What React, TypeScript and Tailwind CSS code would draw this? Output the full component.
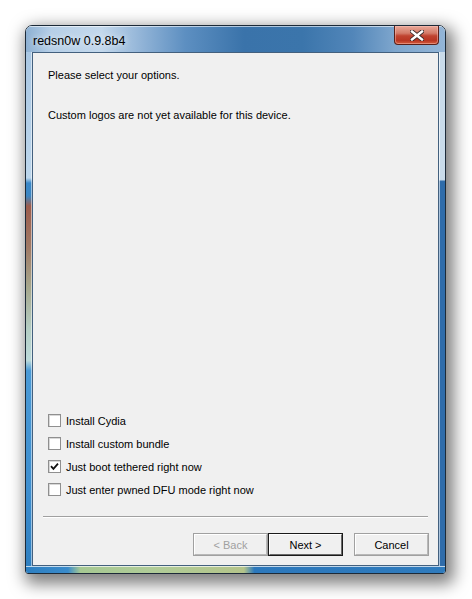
import React from "react";

const options = [
  { label: "Install Cydia", checked: false },
  { label: "Install custom bundle", checked: false },
  { label: "Just boot tethered right now", checked: true },
  { label: "Just enter pwned DFU mode right now", checked: false },
];

function CloseGlyph() {
  return (
    <svg width="14" height="11" viewBox="0 0 14 11">
      <path d="M2 1.5 L12 9.5 M12 1.5 L2 9.5" stroke="#3a2a2a" strokeWidth="4.2" strokeLinecap="square" />
      <path d="M2 1.5 L12 9.5 M12 1.5 L2 9.5" stroke="#ffffff" strokeWidth="2.4" strokeLinecap="square" />
    </svg>
  );
}

function Checkbox({ checked }: { checked: boolean }) {
  return (
    <div className="w-[13px] h-[13px] border border-[#8f8f8f] bg-white flex items-center justify-center shadow-[inset_1px_1px_0_#d8d8d8]">
      {checked && (
        <svg width="9" height="9" viewBox="0 0 9 9">
          <path d="M1 4.2 L3.4 6.8 L8 1.6" stroke="#111" strokeWidth="1.8" fill="none" />
        </svg>
      )}
    </div>
  );
}

function Button({ children, disabled, isDefault }: { children: React.ReactNode; disabled?: boolean; isDefault?: boolean }) {
  return (
    <div
      className={`h-[23px] flex items-center justify-center text-[11px] bg-[#f0f0f0] ${
        isDefault ? "w-[75px] border border-[#1a1a1a]" : "w-[75px] border border-[#a0a0a0]"
      } ${disabled ? "text-[#a0a0a0]" : "text-black"}`}
    >
      <div className={`w-full h-full flex items-center justify-center border ${isDefault ? "border-t-white border-l-white border-r-[#696969] border-b-[#696969]" : "border-t-white border-l-white border-r-[#b8b8b8] border-b-[#b8b8b8]"}`}>
        {children}
      </div>
    </div>
  );
}

export default function App() {
  return (
    <div className="w-[472px] h-[599px] bg-white pt-[25px] pl-[25px] font-['Liberation_Sans',Arial,sans-serif]">
      {/* Fenêtre */}
      <div className="w-[421px] h-[549px] flex flex-col rounded-t-[7px] rounded-b-[3px] border border-[#1c2a38] shadow-[4px_6px_16px_4px_rgba(0,0,0,0.5)] overflow-hidden">
        {/* Barre de titre */}
        <div className="h-[26px] flex items-start justify-between bg-[linear-gradient(to_right,#8db0d2_0%,#b6cfe7_6%,#c3d8ec_18%,#8fb2d6_28%,#5d8fc1_38%,#3a73aa_52%,#3b75ab_66%,#5286b9_78%,#7ea6cd_88%,#93b5d7_100%)] shadow-[inset_0_1px_0_rgba(255,255,255,0.6)]">
          <div className="pl-[7px] pt-[8px] text-[12.5px] leading-[14px] text-black [text-shadow:0_0_6px_rgba(255,255,255,0.9)]">
            redsn0w 0.9.8b4
          </div>
          <div className="mr-[6px] w-[45px] h-[19px] rounded-b-[4px] border border-t-0 border-[#5a2019] bg-[linear-gradient(to_bottom,#e9a898_0%,#d37a68_40%,#c04330_55%,#b83623_80%,#d45b3c_100%)] shadow-[inset_0_0_0_1px_rgba(255,200,190,0.45)] flex items-center justify-center">
            <CloseGlyph />
          </div>
        </div>

        {/* Milieu */}
        <div className="flex flex-1">
          <div className="w-[6px] bg-[linear-gradient(to_bottom,#a9c7e3_0%,#bcd6ec_24.5%,#3a88c8_25.5%,#3c86c2_28%,#9c5c4c_30%,#a07a66_38%,#a6a88e_46%,#b4cec4_54%,#bcdada_60%,#4a9ad6_62%,#3e8fd0_85%,#2f7fc0_100%)] shadow-[inset_-1px_0_0_rgba(255,255,255,0.5)]" />
          {/* Zone cliente */}
          <div className="w-[407px] bg-[#f0f0f0] border border-[#43607e] flex flex-col text-[11px] leading-[14px] text-black">
            <p className="mt-[15px] ml-[15px]">Please select your options.</p>
            <p className="mt-[26px] ml-[15px]">Custom logos are not yet available for this device.</p>

            <div className="mt-auto ml-[15px] flex flex-col">
              {options.map((o) => (
                <div key={o.label} className="h-[23px] flex items-center gap-[5px]">
                  <Checkbox checked={o.checked} />
                  <span>{o.label}</span>
                </div>
              ))}
            </div>

            <div className="mt-[15px] mx-[10px] h-[2px] border-t border-[#a0a0a0] border-b border-b-white" />

            <div className="mt-[15px] mb-[9px] mr-[9px] flex justify-end">
              <Button disabled>&lt; Back</Button>
              <Button isDefault>Next &gt;</Button>
              <div className="w-[11px]" />
              <Button>Cancel</Button>
            </div>
          </div>
          <div className="w-[6px] bg-[linear-gradient(to_bottom,#c9dbea_0%,#c9dbea_24.8%,#2f6caa_25.2%,#2f6caa_100%)] shadow-[inset_1px_0_0_rgba(255,255,255,0.6)]" />
        </div>

        {/* Bordure basse */}
        <div className="h-[7px] bg-[linear-gradient(to_right,#2d7fc1_0%,#3a8bcb_10%,#a6c892_13%,#b0cc98_30%,#b4c48a_52%,#2c78bc_54.5%,#2f7bbd_100%)] shadow-[inset_0_1px_0_rgba(255,255,255,0.7)]" />
      </div>
    </div>
  );
}
